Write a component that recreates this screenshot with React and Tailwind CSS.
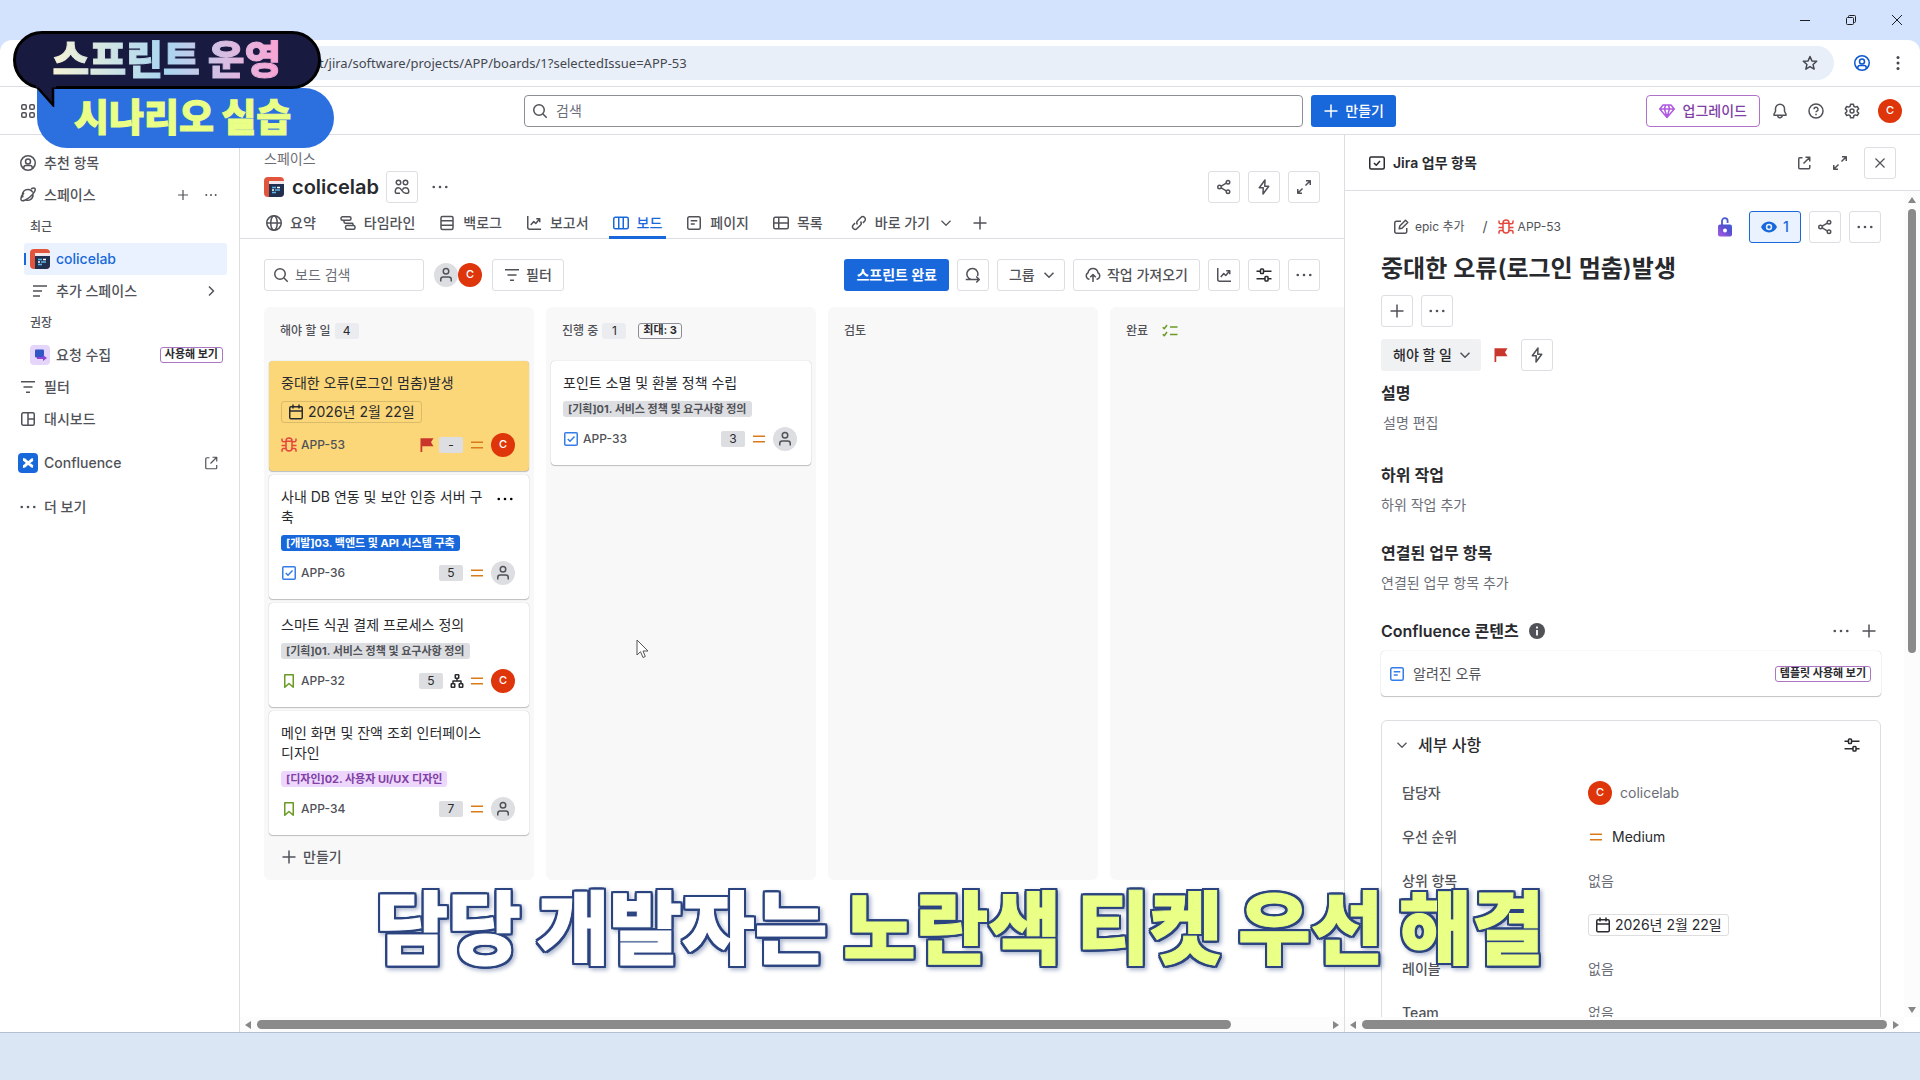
import React from 'react';
import clsx from 'clsx';

// 16px line icons, 1.5px stroke
const ICONS = {
  apps: <><rect x="1.75" y="1.75" width="4.5" height="4.5" rx="1.25" /><rect x="9.75" y="1.75" width="4.5" height="4.5" rx="1.25" /><rect x="1.75" y="9.75" width="4.5" height="4.5" rx="1.25" /><rect x="9.75" y="9.75" width="4.5" height="4.5" rx="1.25" /></>,
  search: <><circle cx="7" cy="7" r="5.25" /><path d="M11 11l3.75 3.75" /></>,
  userCircle: <><circle cx="8" cy="8" r="7.25" /><circle cx="8" cy="6.5" r="2.5" /><path d="M3.8 13.2v-.7c0-1.2 1-2 2-2h4.4c1 0 2 .8 2 2v.7" /></>,
  planet: <><path d="M12.9 5.5A5.25 5.25 0 1 0 3 10.3M13 7.5A5.25 5.25 0 0 1 5.5 12.7" /><path d="M4 5.8C1.7 8.4.5 11.6 1.3 13.2c1 1.5 5.2-.2 8.9-3.4s5.9-7 4.7-8.3c-.6-.6-2.1-.4-3.9.5" /></>,
  plus: <path d="M8 1.5v13M1.5 8h13" />,
  smallPlus: <path d="M8 3v10M3 8h10" />,
  list3: <path d="M1 3h14M1 8h9M1 13h7" />,
  filter: <path d="M1 2.75h14M3.5 8h9M6 13.25h4" />,
  chevronRight: <path d="M6 3.5L10.5 8 6 12.5" />,
  chevronDown: <path d="M3.5 5.75L8 10.25l4.5-4.5" />,
  dashboard: <><rect x="1.75" y="1.75" width="12.5" height="12.5" rx="1.5" /><path d="M8 1.75v12.5M8 8h6.25" /></>,
  external: <><path d="M6.5 2.75H3.75a1 1 0 0 0-1 1v9a1 1 0 0 0 1 1h9a1 1 0 0 0 1-1V10M9.5 2.25h4.25V6.5M13.5 2.5L7.5 8.5" /></>,
  people: <><circle cx="4.5" cy="3.5" r="2.25" /><circle cx="11.5" cy="3.5" r="2.25" /><path d="M6 14.25H2.5c-1 0-1.25-.5-1.25-1.5 0-2.75 1.2-4 3.25-4 3.2 0 3.5 5.5 7 5.5h2c1 0 1.25-.5 1.25-1.5 0-2.75-1.25-4-3.25-4-1.6 0-2.6.8-3 1.9" /></>,
  globe: <><circle cx="8" cy="8" r="7.25" /><ellipse cx="8" cy="8" rx="3.25" ry="7.25" /><path d="M.75 8h14.5" /></>,
  timeline: <><rect x="1" y="1.75" width="10" height="3.5" rx="1.5" /><path d="M4 5.5v1.25a1.5 1.5 0 0 0 1.5 1.5H13M4.5 8.25h8" /><rect x="5.5" y="10.5" width="9.5" height="3.75" rx="1.5" /><path d="M13 8.25v2" /></>,
  backlog: <><rect x="2" y="1.5" width="12" height="13" rx="1.5" /><path d="M2 5.75h12M2 10.25h12" /></>,
  report: <path d="M1.75 1v11.25a2 2 0 0 0 2 2H15M4.75 10l3-3.5 2 2 3.75-4.5M10.25 3.75h3.5v3.5" />,
  board: <><rect x=".75" y="2.25" width="14.5" height="11.5" rx="1.5" /><path d="M5.75 2.25v11.5M10.25 2.25v11.5" /></>,
  page: <><rect x="1.75" y="1.75" width="12.5" height="12.5" rx="1.5" /><path d="M4.75 5.75h6.5M4.75 9h4" /></>,
  table: <><rect x=".75" y="2.25" width="14.5" height="11.5" rx="1.5" /><path d="M5.75 2.25v11.5M.75 8h14.5" /></>,
  link: <path d="M6.5 9.5c-1-1.2-.9-2.7.1-3.7l3.3-3.3a2.6 2.6 0 0 1 3.7 3.7l-1.7 1.7M9.5 6.5c1 1.2.9 2.7-.1 3.7l-3.3 3.3a2.6 2.6 0 0 1-3.7-3.7l1.7-1.7" />,
  share: <><circle cx="12" cy="3.25" r="1.75" /><circle cx="3.5" cy="8" r="1.75" /><circle cx="12" cy="12.75" r="1.75" /><path d="M5.25 7.1l5-2.9M5.25 8.9l5 2.9" /></>,
  bolt: <path d="M9 1L3.25 8.75h4L7 15l5.75-7.75h-4z" />,
  expand: <path d="M10 1.75h4.25V6M14 2L9.5 6.5M6 14.25H1.75V10M2 14l4.5-4.5" />,
  sprint: <path d="M.75 12.5h13.5M11.25 9.5l3 3-3 3M5.75 12.25A5.5 5.5 0 1 1 12.5 9" />,
  cloudUp: <path d="M4.5 12.25A3.5 3.5 0 0 1 3 5.75C3.5 3.2 5.5 1.5 8 1.5s4.5 1.7 5 4.25a3.5 3.5 0 0 1-1.5 6.5M8 15V7.5M5.25 10.25L8 7.5l2.75 2.75" />,
  sliders: <><rect x="4.5" y="2" width="3" height="4.5" rx=".75" /><rect x="9" y="9.5" width="3" height="4.5" rx=".75" /><path d="M.5 4.25h4M7.5 4.25h8M.5 11.75H9M12 11.75h3.5" /></>,
  checklist: <path d="M.75 4.25l1.5 1.5L5 2M.75 11.25l1.5 1.5L5 9M8 4h7.5M8 11.5h7.5" />,
  calendar: <><rect x="1.75" y="2.75" width="12.5" height="12" rx="1.25" /><path d="M1.75 7h12.5M5 .5v4M11 .5v4" /></>,
  bug: <><path d="M5 4.25h6V11a3 3 0 0 1-6 0zM5 4a3 3 0 0 1 6 0M1 1.5v1.75a1.5 1.5 0 0 0 1.5 1.5H5M15 1.5v1.75a1.5 1.5 0 0 1-1.5 1.5H11M.5 8.5H5M11 8.5h4.5M1 14.75V13a1.5 1.5 0 0 1 1.5-1.5H5M15 14.75V13a1.5 1.5 0 0 0-1.5-1.5H11" /></>,
  task: <><rect x="1.75" y="1.75" width="12.5" height="12.5" rx="1" /><path d="M4.75 8l2.25 2.25 4.5-4.75" /></>,
  story: <path d="M3.75 1.75h8.5v12.5L8 10.5l-4.25 3.75z" />,
  person: <><circle cx="8" cy="4.25" r="2.75" /><path d="M2.75 14.5v-2a2.5 2.5 0 0 1 2.5-2.5h5.5a2.5 2.5 0 0 1 2.5 2.5v2" /></>,
  subtasks: <><rect x="6.25" y="1.75" width="3.5" height="3.5" rx=".5" /><rect x="2.25" y="10.75" width="3.5" height="3.5" rx=".5" /><rect x="10.25" y="10.75" width="3.5" height="3.5" rx=".5" /><path d="M8 5.25V8M4 10.75V8h8v2.75" /></>,
  star: <path d="M8 1.5l1.9 4.4 4.8.4-3.65 3.15 1.1 4.65L8 11.6l-4.15 2.5 1.1-4.65L1.3 6.3l4.8-.4z" />,
  bell: <path d="M8 1.25a4.5 4.5 0 0 0-4.5 4.5v2.5L2 11.25v1h12v-1l-1.5-3v-2.5A4.5 4.5 0 0 0 8 1.25zM5.75 12.5a2.25 2.25 0 0 0 4.5 0" />,
  help: <><circle cx="8" cy="8" r="7" /><path d="M6 6.25a2 2 0 1 1 2.9 1.8c-.6.3-.9.7-.9 1.2M8 10.75v1.5" /></>,
  gear: <><path d="M6.6 1.25h2.8l.45 2 1.5.85 1.95-.6 1.4 2.4-1.5 1.35v1.5l1.5 1.35-1.4 2.4-1.95-.6-1.5.85-.45 2H6.6l-.45-2-1.5-.85-1.95.6-1.4-2.4 1.5-1.35v-1.5L1.3 5.9l1.4-2.4 1.95.6 1.5-.85z" /><circle cx="8" cy="8" r="2" /></>,
  gem: <path d="M4 2h8l3.25 4L8 14.5.75 6zM.75 6h14.5M5.5 6L8 14l2.5-8M5.5 6L6.5 2M10.5 6l-1-4" />,
  panelTask: <><rect x=".75" y="2" width="14.5" height="12" rx="1.5" /><path d="M5 8l2.25 2.25L11 6" /></>,
  close: <path d="M3.5 3.5l9 9M12.5 3.5l-9 9" />,
  edit: <path d="M8 2.25H3.5a1.75 1.75 0 0 0-1.75 1.75v8.5a1.75 1.75 0 0 0 1.75 1.75H12a1.75 1.75 0 0 0 1.75-1.75V9M6.25 9.75l.5-2.75 5.75-5.75 2.25 2.25L9 9.25z" />,
};

function Icon({ name, className, thin }) {
  return (
    <svg viewBox="0 0 16 16" fill="none" stroke="currentColor" strokeWidth={thin ? 1.2 : 1.5} strokeLinejoin="round" className={clsx('size-4 shrink-0', className)}>
      {ICONS[name]}
    </svg>
  );
}

function Dots({ className }) {
  return (
    <svg viewBox="0 0 16 16" fill="currentColor" className={clsx('size-4 shrink-0', className)}>
      <circle cx="1.75" cy="8" r="1.3" /><circle cx="8" cy="8" r="1.3" /><circle cx="14.25" cy="8" r="1.3" />
    </svg>
  );
}

function Flag() {
  return (
    <svg viewBox="0 0 16 16" fill="#c9372c" className="size-4 shrink-0">
      <path d="M1.5 1.25h13l-2.5 4 2.5 4H3.25V15H1.5z" />
    </svg>
  );
}

function Priority() {
  return (
    <svg viewBox="0 0 16 16" stroke="#d97a1c" strokeWidth="1.6" className="size-4 shrink-0">
      <path d="M2 5.3h12M2 10.7h12" />
    </svg>
  );
}

function ProjectLogo() {
  return (
    <svg viewBox="0 0 20 20" className="size-5 shrink-0">
      <rect width="20" height="20" rx="4" fill="#e2553d" />
      <path d="M5 4h15v12a4 4 0 0 1-4 4H5z" fill="#22304f" />
      <path d="M5 4h15v3H5z" fill="#f3e9ec" />
      <path d="M8 10.5h4M11 13h5M8 15.5h4" stroke="#5fb4e8" strokeWidth="1.3" />
      <path d="M13 10.5h3M8 13h2" stroke="#fff" strokeWidth="1.3" />
    </svg>
  );
}

function Avatar({ letter, className }) {
  if (letter) {
    return <span className={clsx('flex size-6 shrink-0 items-center justify-center rounded-full bg-[#de350b] text-[11px] font-medium text-white', className)}>{letter}</span>;
  }
  return (
    <span className={clsx('flex size-6 shrink-0 items-center justify-center rounded-full bg-[#dddee1] text-[#505258]', className)}>
      <Icon name="person" />
    </span>
  );
}

function IconButton({ label, children, className }) {
  return (
    <button aria-label={label} className={clsx('flex size-8 shrink-0 items-center justify-center rounded-[3px] border border-[#dddee1] bg-white text-[#505258]', className)}>
      {children}
    </button>
  );
}

function DateChip() {
  return (
    <span className="inline-flex h-[22px] w-fit items-center gap-1 rounded-[3px] border border-[#0b120e24] px-1.5 text-[#292a2e]">
      <Icon name="calendar" />
      <span>2026년 2월 22일</span>
    </span>
  );
}

function TryBadge({ children }) {
  return <span className="flex h-4 items-center rounded-[3px] border border-[#ab76c4] px-1 text-[11px] font-bold text-[#292a2e]">{children}</span>;
}

function BrowserBar() {
  return (
    <div className="shrink-0 bg-[#d3e3fd]">
      <div className="flex h-10 items-center justify-end gap-[30px] pr-[15px] text-[#1f1f1f]">
        <button aria-label="최소화" className="flex size-4 items-center justify-center"><span className="h-px w-2.5 bg-current" /></button>
        <button aria-label="이전 크기로">
          <svg viewBox="0 0 16 16" fill="none" stroke="currentColor" className="size-4"><rect x="3.5" y="5.5" width="7" height="7" rx="1" /><path d="M5.5 5.5v-1a1 1 0 0 1 1-1h5a1 1 0 0 1 1 1v5a1 1 0 0 1-1 1h-1" /></svg>
        </button>
        <button aria-label="닫기">
          <svg viewBox="0 0 16 16" fill="none" stroke="currentColor" className="size-4"><path d="M3 3l10 10M13 3L3 13" /></svg>
        </button>
      </div>
      <div className="flex h-[47px] items-center gap-4 rounded-t-xl border-b border-[#dcdee3] bg-white pr-3.5 pl-24">
        <div className="flex h-[34px] flex-1 items-center rounded-full bg-[#e9eff9] pr-4">
          <input aria-label="주소" defaultValue="t/jira/software/projects/APP/boards/1?selectedIssue=APP-53" className="h-full min-w-0 flex-1 bg-transparent pl-[223px] font-['Noto_Sans','Noto_Sans_CJK_KR',sans-serif] text-[13px] text-[#44474d] outline-none" />
          <Icon name="star" className="text-[#44474d]" />
        </div>
        <Icon name="userCircle" className="ml-1 text-[#0b57d0]" />
        <svg viewBox="0 0 16 16" fill="#44474d" className="ml-1 size-4"><circle cx="8" cy="2.5" r="1.5" /><circle cx="8" cy="8" r="1.5" /><circle cx="8" cy="13.5" r="1.5" /></svg>
      </div>
    </div>
  );
}

function TopNav() {
  return (
    <header className="flex h-12 shrink-0 items-center border-b border-[#dddee1] px-5 text-[#505258]">
      <div className="flex-1"><Icon name="apps" /></div>
      <div className="flex flex-[1.73] gap-2">
        <label className="flex h-8 flex-1 items-center gap-2 rounded-[4px] border border-[#8c8f97] px-[7px]">
          <Icon name="search" />
          <input aria-label="검색" placeholder="검색" className="min-w-0 flex-1 outline-none placeholder:text-[#6b6e76]" />
        </label>
        <button className="flex h-8 items-center gap-1.5 rounded-[3px] bg-[#1868db] px-3 font-medium text-white">
          <Icon name="plus" />만들기
        </button>
      </div>
      <div className="flex flex-1 items-center justify-end gap-5">
        <button className="-mr-2 flex h-8 items-center gap-2 rounded-[4px] border border-[#b071c9] px-3 font-medium text-[#803fa5]">
          <Icon name="gem" className="text-[#af59e1]" />업그레이드
        </button>
        <Icon name="bell" />
        <Icon name="help" />
        <Icon name="gear" />
        <Avatar letter="C" className="-mx-0.5" />
      </div>
    </header>
  );
}

function SideItem({ icon, children, right, nested, active, className }) {
  return (
    <a href="#" className={clsx('flex h-8 items-center gap-1.5 rounded-[3px] pl-1.5 font-medium', nested && 'ml-3', active ? 'bg-[#e9f2fe] text-[#1868db]' : 'text-[#505258]', className)}>
      <span className="flex size-5 shrink-0 items-center justify-center">{icon}</span>
      <span className="flex-1">{children}</span>
      {right}
    </a>
  );
}

function Sidebar() {
  return (
    <nav className="w-60 shrink-0 border-r border-[#dddee1] px-3 pt-3">
      <SideItem icon={<Icon name="userCircle" />}>추천 항목</SideItem>
      <SideItem icon={<Icon name="planet" />} right={<span className="mr-2 flex gap-3"><Icon name="smallPlus" thin /><Dots className="scale-75" /></span>}>스페이스</SideItem>
      <h3 className="flex h-8 items-center pl-[18px] text-xs font-medium text-[#505258]">최근</h3>
      <div className="relative">
        <SideItem nested active icon={<ProjectLogo />}>colicelab</SideItem>
        <span className="absolute top-2.5 left-3 h-3 w-0.5 bg-[#1868db]" />
      </div>
      <SideItem nested icon={<Icon name="list3" />} right={<Icon name="chevronRight" className="mr-2" />}>추가 스페이스</SideItem>
      <h3 className="flex h-8 items-center pl-[18px] text-xs font-medium text-[#505258]">권장</h3>
      <SideItem
        nested
        icon={
          <svg viewBox="0 0 20 20" className="size-5"><rect width="20" height="20" rx="4" fill="#e6d5fa" /><rect x="5" y="4.5" width="9" height="8" rx="1" fill="#2f56c4" /><path d="M7 14h6v2l4-3-4-3v2H7z" fill="#8c45d6" /></svg>
        }
        right={<span className="mr-1"><TryBadge>사용해 보기</TryBadge></span>}
      >
        요청 수집
      </SideItem>
      <SideItem icon={<Icon name="filter" />}>필터</SideItem>
      <SideItem icon={<Icon name="dashboard" />}>대시보드</SideItem>
      <SideItem
        className="mt-3"
        icon={
          <svg viewBox="0 0 20 20" className="size-5"><rect width="20" height="20" rx="4" fill="#1868db" /><path d="M5 6.5c3 0 3 3 5 3s2.5-2.5 5-3M5 13.5c3 0 3-3 5-3s2.5 2.5 5 3" fill="none" stroke="#fff" strokeWidth="3" /></svg>
        }
        right={<Icon name="external" thin className="mr-2" />}
      >
        Confluence
      </SideItem>
      <SideItem className="mt-3" icon={<Dots />}>더 보기</SideItem>
    </nav>
  );
}

const TABS = [
  { icon: 'globe', label: '요약' },
  { icon: 'timeline', label: '타임라인' },
  { icon: 'backlog', label: '백로그' },
  { icon: 'report', label: '보고서' },
  { icon: 'board', label: '보드', active: true },
  { icon: 'page', label: '페이지' },
  { icon: 'table', label: '목록' },
];

function BoardHeader() {
  return (
    <div className="shrink-0 border-b border-[#dddee1]">
      <div className="px-6 pt-3">
        <a href="#" className="block leading-6 text-[#6b6e76]">스페이스</a>
        <div className="flex h-8 items-center">
          <ProjectLogo />
          <h1 className="ml-2 text-xl font-semibold text-[#292a2e]">colicelab</h1>
          <IconButton label="팀" className="ml-[7px]"><Icon name="people" /></IconButton>
          <button aria-label="더 보기" className="ml-3.5 text-[#505258]"><Dots /></button>
          <div className="ml-auto flex gap-2">
            <IconButton label="공유"><Icon name="share" /></IconButton>
            <IconButton label="자동화"><Icon name="bolt" /></IconButton>
            <IconButton label="전체 화면"><Icon name="expand" /></IconButton>
          </div>
        </div>
      </div>
      <div className="mt-1 flex h-[31px] items-stretch gap-4 px-[22px] font-medium text-[#505258]">
        {TABS.map((tab) => (
          <a key={tab.label} href="#" className={clsx('-mb-px flex items-center gap-2 border-b-[3px] px-1 pt-0.5', tab.active ? 'border-[#1868db] text-[#1868db]' : 'border-transparent')}>
            <Icon name={tab.icon} />{tab.label}
          </a>
        ))}
        <a href="#" className="flex items-center gap-2 pl-2">
          <Icon name="link" />바로 가기<Icon name="chevronDown" thin />
        </a>
        <button aria-label="추가" className="pl-0.5"><Icon name="plus" /></button>
      </div>
    </div>
  );
}

function BoardToolbar() {
  return (
    <div className="flex shrink-0 items-center px-6 py-5">
      <label className="flex h-8 w-40 items-center gap-1.5 rounded-[3px] border border-[#dddee1] px-2 text-[#505258]">
        <Icon name="search" />
        <input aria-label="보드 검색" placeholder="보드 검색" className="min-w-0 flex-1 outline-none placeholder:text-[#6b6e76]" />
      </label>
      <div className="ml-2.5 flex">
        <Avatar />
        <Avatar letter="C" />
      </div>
      <button className="ml-2.5 flex h-8 items-center gap-1.5 rounded-[3px] border border-[#dddee1] px-[11px] font-medium text-[#505258]">
        <Icon name="filter" />필터
      </button>
      <div className="ml-auto flex gap-2">
        <button className="h-8 rounded-[3px] bg-[#1868db] px-3 font-bold text-white">스프린트 완료</button>
        <IconButton label="스프린트 세부 정보"><Icon name="sprint" /></IconButton>
        <div className="relative text-[#505258]">
          <select aria-label="그룹" className="h-8 appearance-none rounded-[3px] border border-[#dddee1] bg-white pr-[29px] pl-[11px] font-medium">
            <option>그룹</option>
          </select>
          <Icon name="chevronDown" className="pointer-events-none absolute top-2 right-2" />
        </div>
        <button className="flex h-8 items-center gap-1.5 rounded-[3px] border border-[#dddee1] px-[11px] font-medium text-[#505258]">
          <Icon name="cloudUp" />작업 가져오기
        </button>
        <IconButton label="인사이트"><Icon name="report" /></IconButton>
        <IconButton label="보기 설정"><Icon name="sliders" className="text-[#292a2e]" /></IconButton>
        <IconButton label="더 보기"><Dots /></IconButton>
      </div>
    </div>
  );
}

const TYPE_COLORS = {
  bug: 'text-[#e2483d]',
  task: 'text-[#357de8]',
  story: 'text-[#6a9a23]',
};

const LABEL_COLORS = {
  gray: 'bg-[#dddee1] text-[#505258]',
  blue: 'bg-[#1868db] text-white',
  purple: 'bg-[#eed7fc] text-[#803fa5]',
};

const COLUMNS = [
  {
    title: '해야 할 일',
    count: 4,
    create: true,
    cards: [
      { title: '중대한 오류(로그인 멈춤)발생', date: true, flagged: true, type: 'bug', id: 'APP-53', points: '-', assignee: 'C' },
      { title: '사내 DB 연동 및 보안 인증 서버 구축', label: '[개발]03. 백엔드 및 API 시스템 구축', color: 'blue', type: 'task', id: 'APP-36', points: '5', menu: true },
      { title: '스마트 식권 결제 프로세스 정의', label: '[기획]01. 서비스 정책 및 요구사항 정의', color: 'gray', type: 'story', id: 'APP-32', points: '5', subtasks: true, assignee: 'C' },
      { title: '메인 화면 및 잔액 조회 인터페이스 디자인', label: '[디자인]02. 사용자 UI/UX 디자인', color: 'purple', type: 'story', id: 'APP-34', points: '7' },
    ],
  },
  {
    title: '진행 중',
    count: 1,
    max: '최대: 3',
    cards: [
      { title: '포인트 소멸 및 환불 정책 수립', label: '[기획]01. 서비스 정책 및 요구사항 정의', color: 'gray', type: 'task', id: 'APP-33', points: '3' },
    ],
  },
  { title: '검토', cards: [] },
  { title: '완료', done: true, cards: [] },
];

function Card({ card }) {
  return (
    <article className={clsx('flex flex-col rounded-[4px] pt-3 pr-3.5 pb-3.5 pl-3 shadow-[0_1px_1px_#1e1f2140,0_0_1px_#1e1f214f]', card.flagged ? 'bg-[#fbd779]' : 'bg-white')}>
      <div className="flex items-start">
        <h4 className="min-w-0 flex-1 pr-7 leading-5 break-all text-[#292a2e]">{card.title}</h4>
        {card.menu && <button aria-label="카드 메뉴" className="mr-0.5 -ml-4 pt-1"><Dots /></button>}
      </div>
      <div className="mt-2 flex">
        {card.date ? (
          <DateChip />
        ) : (
          <span className={clsx('h-4 rounded-[3px] px-[5px] text-[11px] leading-4 font-bold whitespace-nowrap', LABEL_COLORS[card.color])}>{card.label}</span>
        )}
      </div>
      <div className="mt-2.5 flex h-6 items-center">
        <Icon name={card.type} className={TYPE_COLORS[card.type]} />
        <a href="#" className="ml-1 flex-1 text-xs font-medium text-[#505258]">{card.id}</a>
        {card.flagged && <span className="mr-1"><Flag /></span>}
        <span className="h-4 w-6 rounded-[2px] bg-[#dddee1] text-center text-xs leading-4 text-[#292a2e]">{card.points}</span>
        {card.subtasks && <Icon name="subtasks" className="ml-1.5 text-[#292a2e]" />}
        <span className={clsx('mr-1.5', card.subtasks ? 'ml-1' : 'ml-1.5')}><Priority /></span>
        <Avatar letter={card.assignee} />
      </div>
    </article>
  );
}

function Column({ column }) {
  return (
    <section className="w-[270px] shrink-0 rounded-md bg-[#f8f8f8] px-[5px] pb-[7px]">
      <div className="flex h-[54px] items-center px-[11px] pb-[7px] text-xs text-[#505258]">
        <h3 className="font-medium">{column.title}</h3>
        {column.count && <span className="ml-1 h-4 w-6 rounded-[3px] bg-[#ebecf0] text-center leading-4 text-[#292a2e]">{column.count}</span>}
        {column.max && <span className="ml-3 flex h-4 items-center rounded-[3px] border border-[#8c8f97] px-1 text-[11px] font-bold text-[#292a2e]">{column.max}</span>}
        {column.done && <Icon name="checklist" className="ml-3.5 text-[#6a9a23]" />}
      </div>
      <div className="flex flex-col gap-1">
        {column.cards.map((card) => (
          <Card key={card.id} card={card} />
        ))}
      </div>
      {column.create && (
        <button className="mt-1.5 flex h-8 items-center gap-1.5 pl-3 text-[#505258]">
          <Icon name="plus" /><span className="font-medium">만들기</span>
        </button>
      )}
    </section>
  );
}

function Arrow({ d }) {
  return <svg viewBox="0 0 10 10" fill="#878787" className="size-2.5 shrink-0"><path d={d} /></svg>;
}

function HScroll({ children }) {
  return (
    <div className="flex h-[15px] shrink-0 items-center gap-1 bg-[#fcfcfc] px-[3px]">
      <Arrow d="M8 1v8L2 5z" />
      <div className="flex flex-1">{children}</div>
      <Arrow d="M2 1v8l6-4z" />
    </div>
  );
}

function Board() {
  return (
    <main className="flex min-w-0 flex-1 flex-col">
      <BoardHeader />
      <BoardToolbar />
      <div className="-mt-1 min-h-0 flex-1 overflow-hidden pl-6">
        <div className="flex gap-3">
          {COLUMNS.map((column) => (
            <Column key={column.title} column={column} />
          ))}
        </div>
      </div>
      <HScroll><span className="h-[9px] w-[91%] rounded-full bg-[#8a8a8a]" /></HScroll>
    </main>
  );
}

function Section({ title, action, className }) {
  return (
    <section className={className}>
      <h3 className="text-base leading-6 font-semibold text-[#292a2e]">{title}</h3>
      <button className="mt-1.5 block leading-6 text-[#6b6e76]">{action}</button>
    </section>
  );
}

function DetailRow({ label, children }) {
  return (
    <div className="flex h-11 items-center">
      <dt className="w-[186px] font-medium text-[#505258]">{label}</dt>
      <dd className="flex items-center text-[#6b6e76]">{children}</dd>
    </div>
  );
}

function IssueBody() {
  return (
    <div className="min-w-0 flex-1 overflow-hidden pt-5 pr-[23px] pl-9">
      <div className="flex h-8 items-center text-[#505258]">
        <Icon name="edit" className="ml-3" />
        <a href="#" className="ml-1.5 text-xs">epic 추가</a>
        <span className="ml-[18px]">/</span>
        <Icon name="bug" className="ml-2.5 text-[#e2483d]" />
        <a href="#" className="ml-1 text-xs">APP-53</a>
        <svg viewBox="0 0 16 20" className="ml-auto h-5 w-4">
          <defs>
            <linearGradient id="lock" x1="0" y1="1" x2="1" y2="0"><stop offset="0" stopColor="#b05be6" /><stop offset=".6" stopColor="#5b4fd0" /><stop offset="1" stopColor="#3a5fd8" /></linearGradient>
          </defs>
          <path d="M5 9V4a2.8 2.8 0 0 1 5.6 0v2" fill="none" stroke="#4a5ad0" strokeWidth="1.8" />
          <rect x="1" y="7.5" width="14" height="12" rx="2" fill="url(#lock)" />
          <circle cx="8" cy="13.5" r="2" fill="#fff" />
        </svg>
        <button aria-label="지켜보기" className="ml-4 flex h-8 w-13 items-center justify-center gap-1.5 rounded-[3px] border border-[#1868db] bg-[#e9f2fe] font-medium text-[#1868db]">
          <svg viewBox="0 0 16 16" className="size-4"><path d="M8 2.5C4.5 2.5 1.5 4.7 0 8c1.5 3.3 4.5 5.5 8 5.5s6.5-2.2 8-5.5c-1.5-3.3-4.5-5.5-8-5.5z" fill="#1868db" /><circle cx="8" cy="8" r="3.2" fill="#e9f2fe" /><circle cx="8" cy="8" r="1.7" fill="#1868db" /></svg>
          1
        </button>
        <IconButton label="공유" className="ml-2"><Icon name="share" /></IconButton>
        <IconButton label="작업" className="ml-2"><Dots /></IconButton>
      </div>

      <h2 className="mt-2.5 text-2xl leading-8 font-semibold text-[#292a2e]">중대한 오류(로그인 멈춤)발생</h2>

      <div className="mt-2.5 flex gap-2">
        <IconButton label="추가"><Icon name="plus" /></IconButton>
        <IconButton label="더 보기"><Dots /></IconButton>
      </div>
      <div className="mt-3 flex items-center">
        <div className="relative">
          <select aria-label="상태" className="h-8 appearance-none rounded-[3px] bg-[#f0f1f2] pr-[29px] pl-3 font-medium text-[#292a2e]">
            <option>해야 할 일</option>
          </select>
          <Icon name="chevronDown" className="pointer-events-none absolute top-2 right-2 text-[#505258]" />
        </div>
        <span className="ml-3"><Flag /></span>
        <IconButton label="자동화" className="ml-3"><Icon name="bolt" /></IconButton>
      </div>

      <Section title="설명" action={<span className="pl-0.5">설명 편집</span>} className="mt-2.5" />
      <Section title="하위 작업" action="하위 작업 추가" className="mt-7" />
      <Section title="연결된 업무 항목" action="연결된 업무 항목 추가" className="mt-6" />

      <div className="mt-6 flex h-6 items-center text-[#505258]">
        <h3 className="text-base font-semibold text-[#292a2e]">Confluence 콘텐츠</h3>
        <svg viewBox="0 0 16 16" className="ml-2.5 size-4"><circle cx="8" cy="8" r="8" fill="#505258" /><path d="M8 3.5v2M8 7v5.5" stroke="#fff" strokeWidth="1.8" /></svg>
        <button aria-label="더 보기" className="ml-auto"><Dots /></button>
        <button aria-label="콘텐츠 추가" className="mr-1 ml-3"><Icon name="plus" /></button>
      </div>
      <a href="#" className="mt-2 flex h-[45px] items-center gap-2 rounded-[4px] pr-2.5 pl-2 text-[#505258] shadow-[0_1px_1px_#1e1f2140,0_0_1px_#1e1f214f]">
        <Icon name="page" className="text-[#357de8]" />
        <span className="flex-1">알려진 오류</span>
        <TryBadge>템플릿 사용해 보기</TryBadge>
      </a>

      <div className="mt-6 rounded-md border border-[#dddee1] px-5 pt-3">
        <div className="-ml-2 flex h-6 items-center">
          <Icon name="chevronDown" thin className="text-[#505258]" />
          <h3 className="ml-2 flex-1 text-base font-medium text-[#292a2e]">세부 사항</h3>
          <Icon name="sliders" className="text-[#292a2e]" />
        </div>
        <dl className="mt-3.5">
          <DetailRow label="담당자"><Avatar letter="C" /><span className="ml-2">colicelab</span></DetailRow>
          <DetailRow label="우선 순위"><Priority /><span className="ml-2 text-[#292a2e]">Medium</span></DetailRow>
          <DetailRow label="상위 항목">없음</DetailRow>
          <DetailRow><DateChip /></DetailRow>
          <DetailRow label="레이블">없음</DetailRow>
          <DetailRow label="Team">없음</DetailRow>
        </dl>
      </div>
    </div>
  );
}

function IssuePanel() {
  return (
    <aside className="flex w-[30%] shrink-0 flex-col border-l border-[#dddee1]">
      <div className="flex h-14 shrink-0 items-center border-b border-[#dddee1] px-6 text-[#505258]">
        <Icon name="panelTask" className="text-[#292a2e]" />
        <h2 className="ml-2 flex-1 font-semibold text-[#292a2e]">Jira 업무 항목</h2>
        <Icon name="external" />
        <Icon name="expand" className="ml-5" />
        <IconButton label="닫기" className="ml-4"><Icon name="close" thin /></IconButton>
      </div>
      <div className="flex min-h-0 flex-1">
        <IssueBody />
        <div className="flex w-4 flex-col items-center gap-1 bg-[#fcfcfc] pt-1 pb-0.5">
          <Arrow d="M1 8h8L5 2z" />
          <div className="flex flex-1 items-start"><span className="h-[56%] w-2 rounded-full bg-[#8a8a8a]" /></div>
          <Arrow d="M1 2h8L5 8z" />
        </div>
      </div>
      <div className="pr-4"><HScroll><span className="h-[9px] w-full rounded-full bg-[#8a8a8a]" /></HScroll></div>
    </aside>
  );
}

// Lesson title stuck over the window corner
function LessonBadge() {
  return (
    <div className="absolute top-[31px] left-[13px] font-black whitespace-nowrap">
      <div className="relative z-10 flex h-[58px] w-[308px] items-center justify-center rounded-full border-[3px] border-black bg-[#191a40]">
        <span className="bg-linear-to-r from-[#f4f3d6] via-[#a9d5f0] via-50% to-[#f9a3d4] bg-clip-text text-[40px] leading-none text-transparent [-webkit-text-stroke:1px_transparent]">스프린트 운영</span>
        <svg viewBox="0 0 20 22" className="absolute top-[51px] left-[20px] h-[22px] w-5">
          <path d="M1 2L17 20V2" fill="#191a40" stroke="#000" strokeWidth="2.5" />
          <path d="M0 0h20v2.5H0z" fill="#191a40" />
        </svg>
      </div>
      <div className="-mt-px ml-6 flex h-[60px] w-[297px] items-center rounded-r-[30px] rounded-bl-[30px] bg-[#2c70e0] pb-0.5 pl-[37px]">
        <span className="text-[38px] leading-none text-[#eaff85] [-webkit-text-stroke:1px_#eaff85]">시나리오 실습</span>
      </div>
    </div>
  );
}

function Caption() {
  return (
    <p className="absolute inset-x-0 bottom-[91px] text-center text-[79px] leading-[120px] font-black whitespace-nowrap text-white [-webkit-text-stroke:1px_#fff] [filter:drop-shadow(2px_0_0_#2b4480)_drop-shadow(-2px_0_0_#2b4480)_drop-shadow(0_2px_0_#2b4480)_drop-shadow(0_-2px_0_#2b4480)_drop-shadow(2px_2px_2px_#2b448066)]">
      담당 개발자는 <span className="text-[#eaff85] [-webkit-text-stroke:1px_#eaff85]">노란색 티켓 우선 해결</span>
    </p>
  );
}

export default function App() {
  return (
    <div className="relative flex h-screen flex-col overflow-hidden bg-white font-['Inter','Noto_Sans_CJK_KR',sans-serif] text-sm">
      <BrowserBar />
      <TopNav />
      <div className="flex min-h-0 flex-1">
        <Sidebar />
        <Board />
        <IssuePanel />
      </div>
      <div className="h-12 shrink-0 border-t border-[#b4c0d2] bg-[#dbe6f4]" />

      <LessonBadge />
      <Caption />
      <svg viewBox="0 0 14 20" className="absolute top-[639px] left-[636px] h-5 w-3.5">
        <path d="M1 1v15l3.5-3.3L7 18.5l2.3-1L7 12h5z" fill="#fff" stroke="#555" />
      </svg>
    </div>
  );
}
